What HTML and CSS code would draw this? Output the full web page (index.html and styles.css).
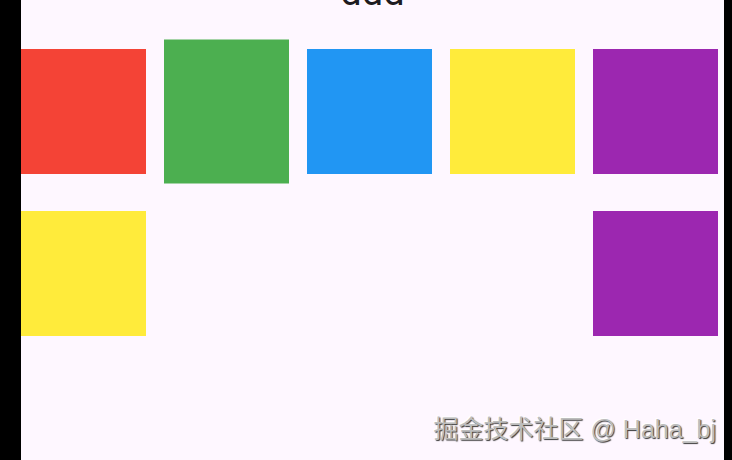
FILE: index.html
```html
<!DOCTYPE html>
<html>
<head>
<meta charset="utf-8">
<link rel="stylesheet" href="styles.css">
</head>
<body>
<div class="frame">
  <div class="bar-left"></div>
  <main class="screen">
    <div class="title">ddd</div>
    <div class="grid">
      <div class="box red"></div>
      <div class="box green"></div>
      <div class="box blue"></div>
      <div class="box yellow"></div>
      <div class="box purple"></div>
      <div class="box yellow"></div>
      <div class="box purple last"></div>
    </div>
    <div class="watermark">掘金技术社区 @ Haha_bj</div>
  </main>
  <div class="bar-right"></div>
</div>
</body>
</html>
```

FILE: styles.css
```css
html, body {
  margin: 0;
  padding: 0;
  background: #000;
}
.frame {
  display: flex;
  width: 732px;
  height: 460px;
  overflow: hidden;
}
.bar-left {
  width: 21px;
  background: #000;
  flex: none;
}
.bar-right {
  flex: 1;
  background: #000;
}
.screen {
  position: relative;
  width: 703px;
  flex: none;
  background: #fef7ff;
  overflow: hidden;
}
.title {
  font-family: Roboto, "Noto Sans", sans-serif;
  font-size: 38px;
  line-height: 38px;
  height: 38px;
  margin-top: -27px;
  text-align: center;
  color: #1d1b20;
}
.grid {
  display: grid;
  grid-template-columns: repeat(5, 125px);
  grid-auto-rows: 125px;
  column-gap: 18px;
  row-gap: 37px;
  margin-top: 38px;
}
.box { width: 125px; height: 125px; }
.red { background: #f44336; }
.green { background: #4caf50; transform: scaleY(1.152); }
.blue { background: #2196f3; }
.yellow { background: #ffeb3b; }
.purple { background: #9c27b0; }
.last { grid-column: 5; }
.watermark {
  position: absolute;
  right: 8px;
  top: 415px;
  font-family: "Liberation Sans", "Noto Sans CJK SC", sans-serif;
  font-size: 25px;
  line-height: 29px;
  color: #bdbdbd;
  text-shadow: 1px 1px 1px #3a3a3a, -1px -1px 0 #ffffff;
  white-space: nowrap;
}
```
